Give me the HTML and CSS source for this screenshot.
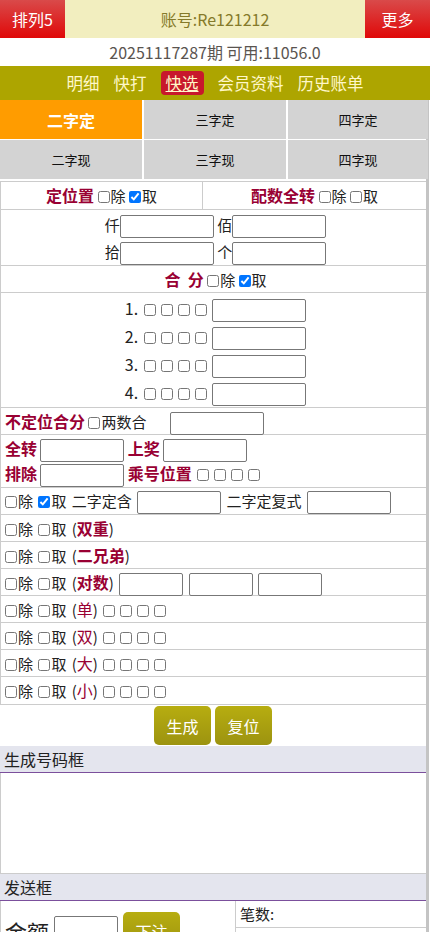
FILE: index.html
```html
<!DOCTYPE html>
<html lang="zh-CN">
<head>
    <meta charset="UTF-8">
    <meta name="viewport" content="width=device-width, initial-scale=1.0">
    <title>排列5 快选</title>
    <link rel="stylesheet" href="styles.css">
</head>
<body>
    <div class="top">
        <a class="top-btn">排列5</a>
        <div class="account">账号:Re121212</div>
        <a class="top-btn">更多</a>
    </div>
    <div class="period">20251117287期 可用:11056.0</div>
    <div class="nav">
        <a>明细</a><a>快打</a><a class="on">快选</a><a>会员资料</a><a>历史账单</a>
    </div>

    <div class="main">
        <div class="tabs">
            <div class="tab active">二字定</div>
            <div class="tab">三字定</div>
            <div class="tab">四字定</div>
            <div class="tab">二字现</div>
            <div class="tab">三字现</div>
            <div class="tab">四字现</div>
        </div>

        <div class="form">
            <div class="row split">
                <div class="cell"><b class="red">定位置</b> <input type="checkbox">除 <input type="checkbox" checked>取</div>
                <div class="cell"><b class="red">配数全转</b> <input type="checkbox">除 <input type="checkbox">取</div>
            </div>
            <div class="row multi center">
                <div class="line l27">仟<input class="txt w93"> 佰<input class="txt w93"></div>
                <div class="line l27">拾<input class="txt w93"> 个<input class="txt w93"></div>
            </div>
            <div class="row center"><b class="red">合&nbsp;&nbsp;分</b> <input type="checkbox">除 <input type="checkbox" checked>取</div>
            <div class="row multi center sums">
                <div class="line l28">1.<span class="boxes"><input type="checkbox"><input type="checkbox"><input type="checkbox"><input type="checkbox"></span><input class="txt w93"></div>
                <div class="line l28">2.<span class="boxes"><input type="checkbox"><input type="checkbox"><input type="checkbox"><input type="checkbox"></span><input class="txt w93"></div>
                <div class="line l28">3.<span class="boxes"><input type="checkbox"><input type="checkbox"><input type="checkbox"><input type="checkbox"></span><input class="txt w93"></div>
                <div class="line l28">4.<span class="boxes"><input type="checkbox"><input type="checkbox"><input type="checkbox"><input type="checkbox"></span><input class="txt w93"></div>
            </div>
            <div class="row"><b class="red">不定位合分</b> <input type="checkbox">两数合 <input class="txt w93 push"></div>
            <div class="row multi pair">
                <div class="line l25"><b class="red">全转</b> <input class="txt w83"> <b class="red">上奖</b> <input class="txt w83"></div>
                <div class="line l25"><b class="red">排除</b> <input class="txt w83"> <b class="red">乘号位置</b><span class="boxes"><input type="checkbox"><input type="checkbox"><input type="checkbox"><input type="checkbox"></span></div>
            </div>
            <div class="row wide"><input type="checkbox">除 <input type="checkbox" checked>取 二字定含 <input class="txt w83"> 二字定复式 <input class="txt w83"></div>
            <div class="row wide"><input type="checkbox">除 <input type="checkbox">取 (<b class="red">双重</b>)</div>
            <div class="row wide"><input type="checkbox">除 <input type="checkbox">取 (<b class="red">二兄弟</b>)</div>
            <div class="row wide"><input type="checkbox">除 <input type="checkbox">取 (<b class="red">对数</b>) <input class="txt w63"> <input class="txt w63"> <input class="txt w63"></div>
            <div class="row wide"><input type="checkbox">除 <input type="checkbox">取 (<span class="red">单</span>)<span class="boxes"><input type="checkbox"><input type="checkbox"><input type="checkbox"><input type="checkbox"></span></div>
            <div class="row wide"><input type="checkbox">除 <input type="checkbox">取 (<span class="red">双</span>)<span class="boxes"><input type="checkbox"><input type="checkbox"><input type="checkbox"><input type="checkbox"></span></div>
            <div class="row wide"><input type="checkbox">除 <input type="checkbox">取 (<span class="red">大</span>)<span class="boxes"><input type="checkbox"><input type="checkbox"><input type="checkbox"><input type="checkbox"></span></div>
            <div class="row wide last"><input type="checkbox">除 <input type="checkbox">取 (<span class="red">小</span>)<span class="boxes"><input type="checkbox"><input type="checkbox"><input type="checkbox"><input type="checkbox"></span></div>
        </div>

        <div class="actions">
            <button class="btn">生成</button>
            <button class="btn">复位</button>
        </div>

        <div class="box-title">生成号码框</div>
        <div class="result"></div>

        <div class="box-title">发送框</div>
        <div class="send">
            <div class="send-left">
                <span class="amount">金额</span>
                <input class="txt w63 tall">
                <button class="btn">下注</button>
            </div>
            <div class="send-right">
                <div class="stat">笔数:</div>
                <div class="stat"></div>
            </div>
        </div>
    </div>
</body>
</html>
```

FILE: styles.css
```css
body { margin: 0; font-family: "Noto Sans CJK SC", "Liberation Sans", sans-serif; font-size: 15px; color: #222; background: #fff; }
a { cursor: pointer; }

.top { display: flex; height: 38px; }
.top-btn { width: 65px; display: flex; align-items: center; justify-content: center; color: #fff; font-size: 16px; background: linear-gradient(#d94a4a, #e00808); }
.account { flex: 1; display: flex; align-items: center; justify-content: center; background: #f2eebf; color: #857a2a; font-size: 16px; }
.period { height: 28px; line-height: 28px; text-align: center; color: #5a5450; font-size: 16px; }
.nav { height: 34px; background: #ada500; display: flex; justify-content: center; align-items: center; gap: 2px; }
.nav a { color: #fff7c8; font-size: 16.5px; padding: 0 6px; line-height: 24px; border-radius: 4px; }
.nav a.on { background: #c8182c; text-decoration: underline; margin: 0 6px; padding: 0 5px; }

.main { width: 426px; border-right: 3px solid #c4c4c4; }

.tabs { display: grid; grid-template-columns: 142px 142px 140px; gap: 1px 2px; padding-bottom: 2px; }
.tab { height: 39px; background: #d3d3d3; display: flex; align-items: center; justify-content: center; font-size: 13px; color: #111; }
.tab.active { background: #ff9c00; color: #fff; font-size: 16px; font-weight: bold; }

.form { border-left: 1px solid #ccc; }
.row { border-top: 1px solid #ccc; height: 26px; line-height: 26px; padding-left: 4px; white-space: nowrap; }
.row.wide { word-spacing: 2px; }
.row.last { height: 27px; line-height: 27px; }
.center { text-align: center; }
.row.multi { height: auto; line-height: normal; padding-top: 1px; }
.row.sums, .row.pair { padding-bottom: 1px; }
.line.l27 { height: 27px; line-height: 27px; }
.line.l28 { height: 28px; line-height: 28px; font-size: 16px; }
.line.l25 { height: 25px; line-height: 25px; }
.row.split { display: flex; padding: 0; height: 27px; line-height: 27px; }
.split .cell { text-align: center; }
.split .cell:first-child { width: 201px; border-right: 1px solid #ccc; }
.split .cell:last-child { flex: 1; }
.red { color: #990033; font-size: 16px; }
b.red { font-weight: bold; }

input[type=checkbox] { width: 12px; height: 12px; margin: 0 1px 0 0; vertical-align: -1px; }
.boxes { display: inline-block; margin: 0 5px 0 5px; word-spacing: 0; }
.boxes input[type=checkbox] { margin: 0 5px 0 0; }
.boxes input[type=checkbox]:last-child { margin-right: 0; }
.sums .boxes { margin: 0 5px 0 6px; }

.txt { box-sizing: border-box; height: 23px; border: 1px solid #777; border-radius: 2px; padding: 0 2px; font: inherit; vertical-align: middle; margin: 0; }
.w93 { width: 94px; }
.w83 { width: 84px; }
.w63 { width: 64px; }
.tall { height: 30px; }
.push { margin-left: 20px; }

.actions { display: flex; justify-content: center; gap: 4px; padding: 1px 0; border-top: 1px solid #ccc; }
.btn { width: 57px; height: 39px; border: none; border-radius: 5px; background: linear-gradient(#b7ad10, #9c9310); color: #fff; font: inherit; font-size: 16px; }

.box-title { height: 26px; line-height: 26px; background: #e4e5ee; border-bottom: 1px solid #7b4f9c; padding-left: 4px; font-size: 16px; }
.result { height: 100px; border-bottom: 1px solid #ccc; border-left: 1px solid #ccc; }

.send { display: flex; border-left: 1px solid #ccc; }
.send-left { width: 235px; display: flex; align-items: center; gap: 5px; padding: 6px 0 0 4px; box-sizing: border-box; border-right: 1px solid #ccc; }
.amount { font-size: 22px; }
.send-right { flex: 1; }
.stat { height: 26px; line-height: 26px; border-bottom: 1px solid #ccc; padding-left: 4px; font-size: 15px; }
```
